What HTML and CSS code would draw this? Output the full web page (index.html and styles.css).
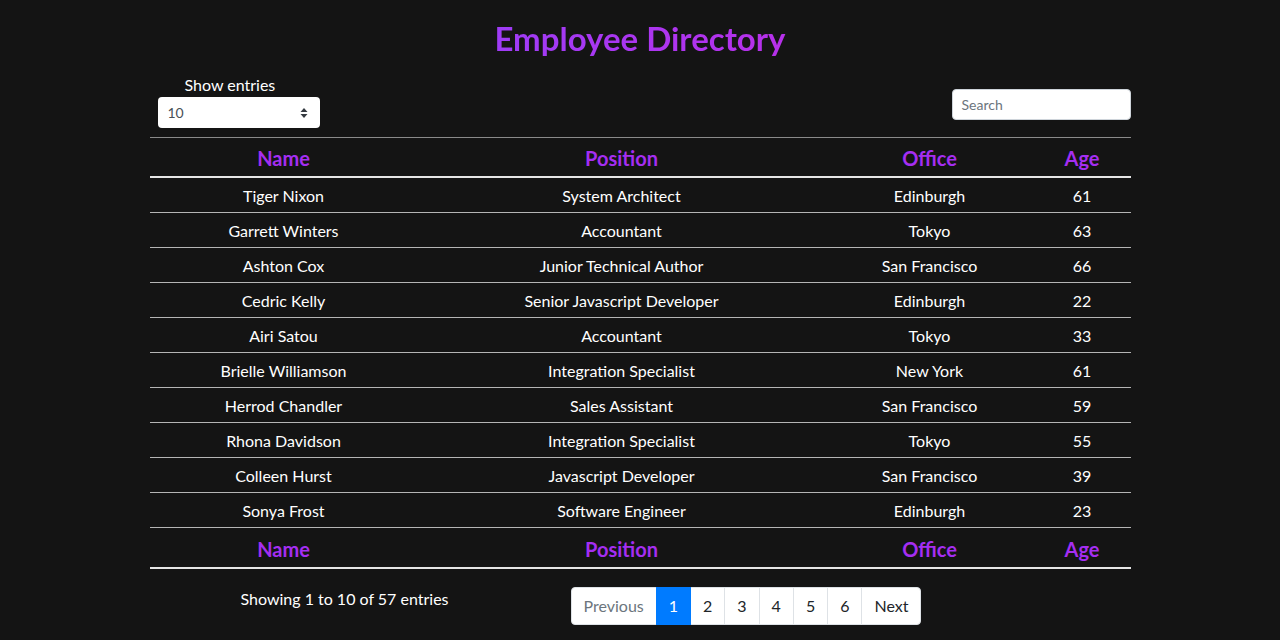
FILE: index.html
```html
<!DOCTYPE html>
<html lang="en">
<head>
<meta charset="utf-8">
<title>Employee Directory</title>
<link rel="stylesheet" href="styles.css">
</head>
<body>
<h1 class="title">Employee Directory</h1>
<div class="wrap">
  <div class="controls">
    <div class="length">
      <label class="length-label" for="len">Show entries</label>
      <div class="select">
        <span class="select-value">10</span>
        <svg class="select-arrows" width="8" height="12" viewBox="0 0 8 12"><path d="M4 1 L7.5 5 L0.5 5 Z M4 11 L7.5 7 L0.5 7 Z" fill="#343a40"/></svg>
      </div>
    </div>
    <div class="search">Search</div>
  </div>
  <table class="grid">
    <thead>
      <tr><th class="c-name">Name</th><th class="c-pos">Position</th><th class="c-off">Office</th><th class="c-age">Age</th></tr>
    </thead>
    <tbody>
      <tr><td>Tiger Nixon</td><td>System Architect</td><td>Edinburgh</td><td>61</td></tr>
      <tr><td>Garrett Winters</td><td>Accountant</td><td>Tokyo</td><td>63</td></tr>
      <tr><td>Ashton Cox</td><td>Junior Technical Author</td><td>San Francisco</td><td>66</td></tr>
      <tr><td>Cedric Kelly</td><td>Senior Javascript Developer</td><td>Edinburgh</td><td>22</td></tr>
      <tr><td>Airi Satou</td><td>Accountant</td><td>Tokyo</td><td>33</td></tr>
      <tr><td>Brielle Williamson</td><td>Integration Specialist</td><td>New York</td><td>61</td></tr>
      <tr><td>Herrod Chandler</td><td>Sales Assistant</td><td>San Francisco</td><td>59</td></tr>
      <tr><td>Rhona Davidson</td><td>Integration Specialist</td><td>Tokyo</td><td>55</td></tr>
      <tr><td>Colleen Hurst</td><td>Javascript Developer</td><td>San Francisco</td><td>39</td></tr>
      <tr><td>Sonya Frost</td><td>Software Engineer</td><td>Edinburgh</td><td>23</td></tr>
    </tbody>
    <tfoot>
      <tr><th>Name</th><th>Position</th><th>Office</th><th>Age</th></tr>
    </tfoot>
  </table>
  <div class="bottom">
    <div class="info">Showing 1 to 10 of 57 entries</div>
    <ul class="pager">
      <li class="page disabled">Previous</li>
      <li class="page active">1</li>
      <li class="page">2</li>
      <li class="page">3</li>
      <li class="page">4</li>
      <li class="page">5</li>
      <li class="page">6</li>
      <li class="page">Next</li>
    </ul>
  </div>
</div>
</body>
</html>
```
FILE: styles.css
```css
html, body {
  margin: 0;
  padding: 0;
  background: #141414;
  color: #ffffff;
  font-family: "Lato", "Open Sans", sans-serif;
  font-size: 16px;
}

.title {
  margin: 0 auto;
  padding-top: 19px;
  text-align: center;
  font-size: 33px;
  font-weight: 700;
  line-height: 38px;
  color: #a632f0;
  background: linear-gradient(90deg, #9f3cf6, #b730ea);
  -webkit-background-clip: text;
  background-clip: text;
  -webkit-text-fill-color: transparent;
  width: max-content;
}

.wrap {
  width: 981px;
  margin: 0 auto;
}

.controls {
  display: flex;
  justify-content: space-between;
  align-items: flex-end;
  padding: 16px 0 9px 8px;
}

.length {
  display: flex;
  flex-direction: column;
}

.length-label {
  margin-left: 27px;
  line-height: 24px;
}

.select {
  width: 162px;
  height: 31px;
  box-sizing: border-box;
  background: #fff;
  border-radius: 4px;
  display: flex;
  align-items: center;
  justify-content: space-between;
  padding: 0 12px 0 10px;
  color: #495057;
  font-size: 14px;
}

.search {
  width: 179px;
  height: 31px;
  box-sizing: border-box;
  background: #fff;
  border-radius: 4px;
  border: 1px solid #ced4da;
  color: #6c757d;
  font-size: 14px;
  line-height: 29px;
  padding-left: 9px;
  margin-bottom: 8px;
}

.grid {
  width: 100%;
  border-collapse: collapse;
  text-align: center;
}

.grid th {
  color: #a52ef2;
  font-size: 20px;
  font-weight: 700;
  line-height: 30px;
  padding: 5px 0 3px;
}

.grid thead tr {
  border-top: 1px solid #8a8a8a;
  border-bottom: 2px solid #e6e6e6;
}

.grid tfoot tr {
  border-bottom: 2px solid #e6e6e6;
}

.grid tfoot th {
  padding: 6px 0 3px;
}

.grid td {
  line-height: 24px;
  padding: 6px 0 4px;
}

.grid tbody tr {
  border-bottom: 1px solid #b5b5b5;
}

.c-name { width: 268px; }
.c-pos { width: 408px; }
.c-off { width: 208px; }
.c-age { width: 97px; }

.bottom {
  display: flex;
  align-items: center;
  padding-top: 18px;
}

.info {
  width: 390px;
  text-align: center;
  margin-bottom: 15px;
}

.pager {
  list-style: none;
  margin: 0 0 0 31px;
  padding: 0;
  display: flex;
}

.page {
  background: #fff;
  color: #212529;
  border: 1px solid #dee2e6;
  margin-left: -1px;
  padding: 8px 12px;
  line-height: 20px;
}

.page:first-child {
  margin-left: 0;
  border-radius: 4px 0 0 4px;
}

.page:last-child {
  border-radius: 0 4px 4px 0;
}

.page.disabled {
  color: #6c757d;
}

.page.active {
  background: #007bff;
  border-color: #007bff;
  color: #fff;
  position: relative;
}
```
